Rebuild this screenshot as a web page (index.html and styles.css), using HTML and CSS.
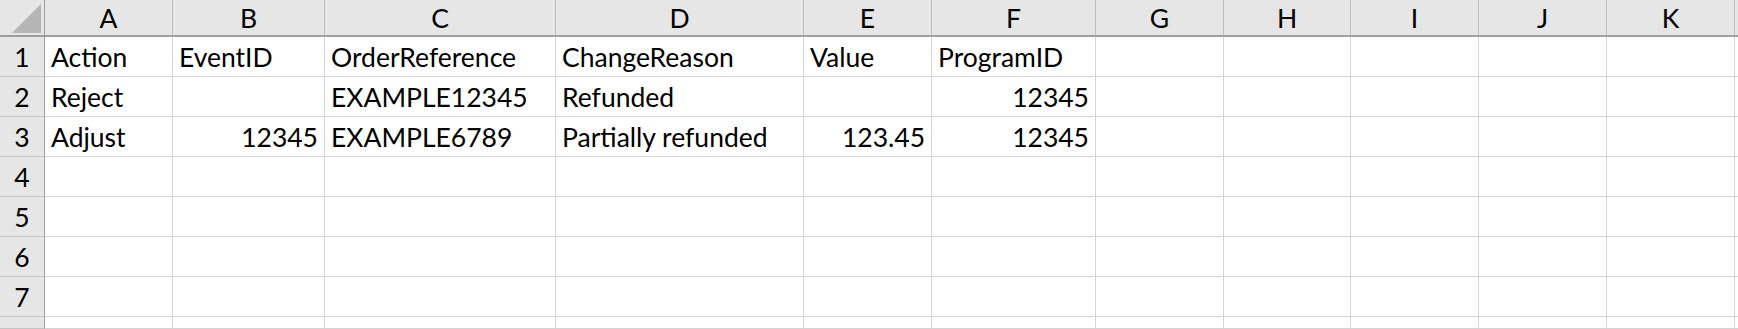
FILE: index.html
```html
<!DOCTYPE html>
<html lang="en">
<head>
  <meta charset="UTF-8">
  <meta name="viewport" content="width=device-width, initial-scale=1.0">
  <title>Sheet1</title>
  <link rel="stylesheet" href="styles.css">
</head>
<body>
  <div class="sheet">
    <div class="corner"><div class="tri"></div></div>
    <div class="colhead">A</div>
    <div class="colhead">B</div>
    <div class="colhead">C</div>
    <div class="colhead">D</div>
    <div class="colhead">E</div>
    <div class="colhead">F</div>
    <div class="colhead">G</div>
    <div class="colhead">H</div>
    <div class="colhead">I</div>
    <div class="colhead">J</div>
    <div class="colhead">K</div>
    <div class="colhead"></div>

    <div class="rowhead">1</div>
    <div class="cell">Action</div>
    <div class="cell">EventID</div>
    <div class="cell">OrderReference</div>
    <div class="cell">ChangeReason</div>
    <div class="cell">Value</div>
    <div class="cell">ProgramID</div>
    <div class="cell"></div><div class="cell"></div><div class="cell"></div><div class="cell"></div><div class="cell"></div><div class="cell"></div>

    <div class="rowhead">2</div>
    <div class="cell">Reject</div>
    <div class="cell"></div>
    <div class="cell">EXAMPLE12345</div>
    <div class="cell">Refunded</div>
    <div class="cell"></div>
    <div class="cell num">12345</div>
    <div class="cell"></div><div class="cell"></div><div class="cell"></div><div class="cell"></div><div class="cell"></div><div class="cell"></div>

    <div class="rowhead">3</div>
    <div class="cell">Adjust</div>
    <div class="cell num">12345</div>
    <div class="cell">EXAMPLE6789</div>
    <div class="cell">Partially refunded</div>
    <div class="cell num">123.45</div>
    <div class="cell num">12345</div>
    <div class="cell"></div><div class="cell"></div><div class="cell"></div><div class="cell"></div><div class="cell"></div><div class="cell"></div>
  </div>

  <script>
    // empty rows 4..7, plus the top sliver of row 8 (its number is below the window)
    const sheet = document.querySelector('.sheet');
    for (let r = 4; r <= 8; r++) {
      const head = document.createElement('div');
      head.className = 'rowhead';
      if (r < 8) head.textContent = r;
      sheet.appendChild(head);
      for (let c = 0; c < 12; c++) {
        const cell = document.createElement('div');
        cell.className = 'cell';
        sheet.appendChild(cell);
      }
    }
  </script>
</body>
</html>
```

FILE: styles.css
```css
body {
  margin: 0;
  background: #ffffff;
  overflow: hidden;
  font-family: Lato, "Open Sans", sans-serif;
  font-size: 26.5px;
  color: #000000;
}
.sheet {
  display: grid;
  grid-template-columns: 45px 128px 152px 231px 248px 128px 164px 128px 127px 128px 128px 128px 10px;
  grid-template-rows: 37px repeat(7, 40px) 12px;
}
.corner {
  background: #e6e6e6;
  border-right: 1px solid #9e9e9e;
  border-bottom: 2px solid #9e9e9e;
  position: relative;
}
.tri {
  position: absolute;
  right: 3px;
  bottom: 2px;
  width: 0;
  height: 0;
  border-left: 29px solid transparent;
  border-bottom: 29px solid #b5b5b5;
}
.colhead {
  background: #e6e6e6;
  border-right: 1px solid #bcbcbc;
  border-bottom: 2px solid #9e9e9e;
  display: flex;
  align-items: flex-end;
  justify-content: center;
  padding-bottom: 4px;
  line-height: 1;
}
.rowhead {
  background: #e6e6e6;
  border-right: 1px solid #9e9e9e;
  border-bottom: 1px solid #c4c4c4;
  display: flex;
  align-items: flex-end;
  justify-content: center;
  padding-bottom: 6px;
  line-height: 1;
}
.cell {
  border-right: 1px solid #d4d4d4;
  border-bottom: 1px solid #d4d4d4;
  display: flex;
  align-items: flex-end;
  padding: 0 6px 6px 6px;
  line-height: 1;
  white-space: nowrap;
}
.num {
  justify-content: flex-end;
}
```
